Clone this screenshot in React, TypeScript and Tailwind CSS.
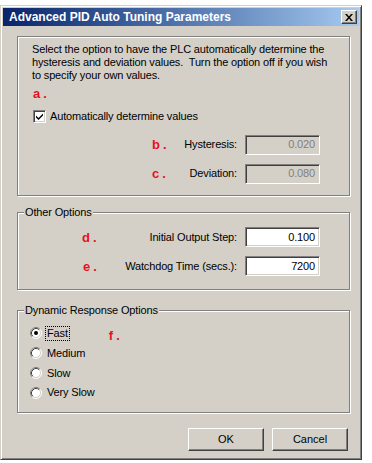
import React from "react";

function Tag({ t }: { t: string }) {
  return (
    <span className="text-[13px] font-bold text-[#e8101c] leading-[13px] whitespace-nowrap tracking-normal">
      {t}
      <span className="ml-[3px]">.</span>
    </span>
  );
}

function Field({ value, disabled }: { value: string; disabled?: boolean }) {
  return (
    <div
      className={`w-[75px] h-[20px] border border-[#808080] border-r-white border-b-white shadow-[inset_1px_1px_0_#404040,inset_-1px_-1px_0_#d4d0c8] flex items-center justify-end pr-[4px] text-[11px] ${
        disabled ? "bg-[#d4d0c8] text-[#808080]" : "bg-white text-black"
      }`}
    >
      {value}
    </div>
  );
}

function Radio({ checked }: { checked?: boolean }) {
  return (
    <svg width="12" height="12" viewBox="0 0 12 12" className="shrink-0">
      <circle cx="6" cy="6" r="5" fill="#fff" />
      <path d="M2.11 9.89A5.5 5.5 0 0 1 9.89 2.11" fill="none" stroke="#808080" />
      <path d="M2.82 9.18A4.5 4.5 0 0 1 9.18 2.82" fill="none" stroke="#404040" />
      <path d="M9.89 2.11A5.5 5.5 0 0 1 2.11 9.89" fill="none" stroke="#fff" />
      <path d="M9.18 2.82A4.5 4.5 0 0 1 2.82 9.18" fill="none" stroke="#d4d0c8" />
      {checked && <circle cx="6" cy="6" r="2" fill="#000" />}
    </svg>
  );
}

function Btn({ label }: { label: string }) {
  return (
    <button className="w-[76px] h-[23px] bg-[#d4d0c8] border border-white border-r-[#404040] border-b-[#404040] shadow-[inset_-1px_-1px_0_#808080] text-[11px] text-black">
      {label}
    </button>
  );
}

const etched =
  "border border-[#808080] shadow-[inset_1px_1px_0_#fff,1px_1px_0_#fff]";

export default function App() {
  return (
    <div className="w-[372px] h-[463px] bg-white pt-[5px] font-['Liberation_Sans',Arial,sans-serif] text-black">
      <div className="w-[362px] h-[455px] bg-[#d4d0c8] border border-[#d4d0c8] border-r-[#404040] border-b-[#404040] shadow-[inset_1px_1px_0_#fff,inset_-1px_-1px_0_#808080] p-[2px] flex flex-col">
        {/* title bar */}
        <div className="h-[18px] shrink-0 bg-linear-to-r from-[#0a246a] to-[#a6caf0] flex items-center justify-between pl-[6px] pr-[2px]">
          <span className="text-white font-bold text-[12px] leading-none">
            Advanced PID Auto Tuning Parameters
          </span>
          <div className="w-[16px] h-[14px] bg-[#d4d0c8] border border-white border-r-[#404040] border-b-[#404040] shadow-[inset_-1px_-1px_0_#808080] flex items-center justify-center">
            <svg width="8" height="7" viewBox="0 0 8 7">
              <path d="M0 0h2l2 2.5L6 0h2L5 3.5 8 7H6L4 4.5 2 7H0l3-3.5z" fill="#000" />
            </svg>
          </div>
        </div>

        {/* auto determine group */}
        <div className={`mt-[10px] ml-[14px] w-[333px] h-[160px] ${etched} pl-[14px] pt-[6px] text-[11px] tracking-[-0.15px]`}>
          <p className="leading-[13px]">
            Select the option to have the PLC automatically determine the
            <br />
            hysteresis and deviation values.{"\u00a0"} Turn the option off if you wish
            <br />
            to specify your own values.
          </p>
          <div className="mt-[4px] ml-[1px]">
            <Tag t="a" />
          </div>
          <div className="mt-[7px] ml-[1px] flex items-center gap-[4px]">
            <div className="w-[13px] h-[13px] bg-white border border-[#808080] border-r-white border-b-white shadow-[inset_1px_1px_0_#404040,inset_-1px_-1px_0_#d4d0c8] flex items-center justify-center">
              <svg width="7" height="7" viewBox="0 0 7 7">
                <path d="M0 2.5v2l2.5 2.5L7 2.5v-2L2.5 5z" fill="#000" />
              </svg>
            </div>
            <span className="leading-[13px]">Automatically determine values</span>
          </div>
          <div className="mt-[12px] w-[288px] flex items-center">
            <div className="w-[120px]" />
            <Tag t="b" />
            <span className="flex-1 text-right">Hysteresis:</span>
            <div className="ml-[8px]">
              <Field value="0.020" disabled />
            </div>
          </div>
          <div className="mt-[9px] w-[288px] flex items-center">
            <div className="w-[120px]" />
            <Tag t="c" />
            <span className="flex-1 text-right">Deviation:</span>
            <div className="ml-[8px]">
              <Field value="0.080" disabled />
            </div>
          </div>
        </div>

        {/* other options */}
        <fieldset className={`mt-[9px] ml-[14px] w-[333px] h-[85px] ${etched} pl-[14px] text-[11px] tracking-[-0.15px]`}>
          <legend className="-ml-[8px] px-[1px] bg-[#d4d0c8] leading-[14px]">Other Options</legend>
          <div className="mt-[8px] w-[288px] flex items-center">
            <div className="w-[50px]" />
            <Tag t="d" />
            <span className="flex-1 text-right">Initial Output Step:</span>
            <div className="ml-[8px]">
              <Field value="0.100" />
            </div>
          </div>
          <div className="mt-[9px] w-[288px] flex items-center">
            <div className="w-[51px]" />
            <Tag t="e" />
            <span className="flex-1 text-right">Watchdog Time (secs.):</span>
            <div className="ml-[8px]">
              <Field value="7200" />
            </div>
          </div>
        </fieldset>

        {/* dynamic response */}
        <fieldset className={`mt-[13px] ml-[14px] w-[333px] h-[110px] ${etched} pl-[12px] text-[11px] tracking-[-0.15px]`}>
          <legend className="-ml-[6px] px-[1px] bg-[#d4d0c8] leading-[14px]">Dynamic Response Options</legend>
          <div className="mt-[6px] flex flex-col">
            <div className="h-[20px] flex items-center">
              <Radio checked />
              <span className="ml-[4px] px-[1px] leading-[13px] outline outline-1 outline-dotted outline-black">Fast</span>
              <span className="ml-[40px] mt-[6px]">
                <Tag t="f" />
              </span>
            </div>
            <div className="h-[20px] flex items-center">
              <Radio />
              <span className="ml-[5px] leading-[13px]">Medium</span>
            </div>
            <div className="h-[20px] flex items-center">
              <Radio />
              <span className="ml-[5px] leading-[13px]">Slow</span>
            </div>
            <div className="h-[19px] flex items-center">
              <Radio />
              <span className="ml-[5px] leading-[13px]">Very Slow</span>
            </div>
          </div>
        </fieldset>

        {/* buttons */}
        <div className="mt-[15px] flex justify-end gap-[8px] pr-[11px]">
          <Btn label="OK" />
          <Btn label="Cancel" />
        </div>
      </div>
    </div>
  );
}
